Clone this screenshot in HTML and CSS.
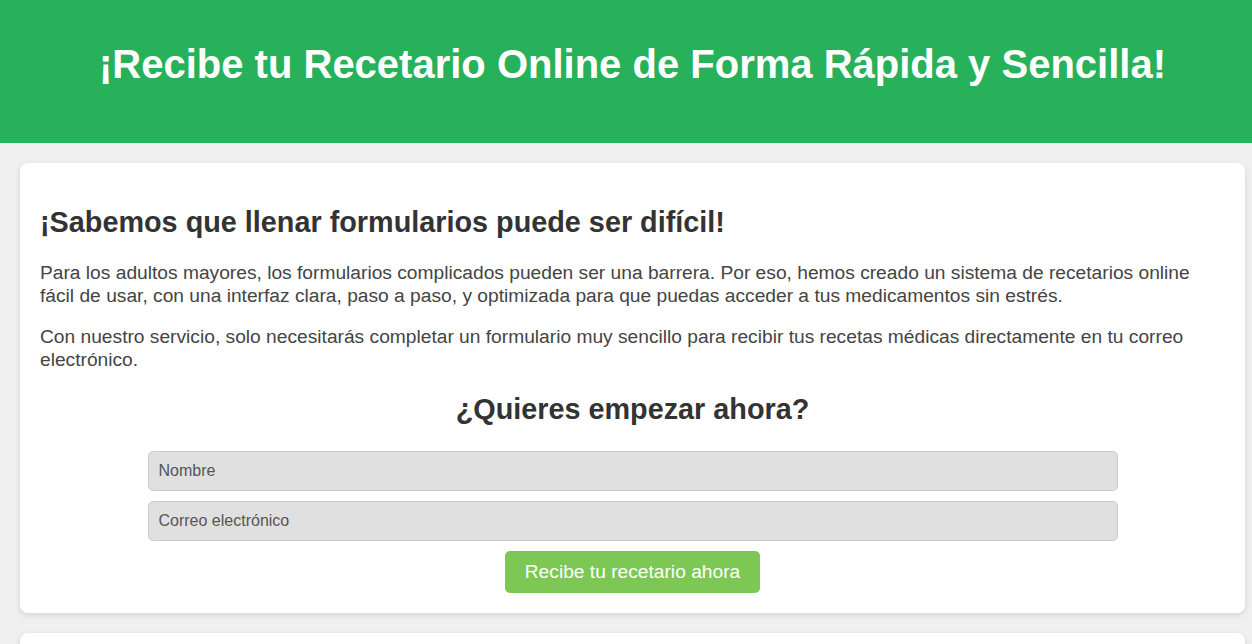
FILE: index.html
```html
<!DOCTYPE html>
<html lang="es">
<head>
<meta charset="utf-8">
<title>Recetario Online</title>
<link rel="stylesheet" href="styles.css">
</head>
<body>
<div class="page">
  <header class="hero">
    <h1>¡Recibe tu Recetario Online de Forma Rápida y Sencilla!</h1>
  </header>
  <main class="main">
    <section class="card">
      <h2>¡Sabemos que llenar formularios puede ser difícil!</h2>
      <p>Para los adultos mayores, los formularios complicados pueden ser una barrera. Por eso, hemos creado un sistema de recetarios online fácil de usar, con una interfaz clara, paso a paso, y optimizada para que puedas acceder a tus medicamentos sin estrés.</p>
      <p>Con nuestro servicio, solo necesitarás completar un formulario muy sencillo para recibir tus recetas médicas directamente en tu correo electrónico.</p>
      <h3>¿Quieres empezar ahora?</h3>
      <form class="form">
        <input class="field" type="text" placeholder="Nombre">
        <input class="field" type="email" placeholder="Correo electrónico">
        <button class="btn" type="button">Recibe tu recetario ahora</button>
      </form>
    </section>
    <section class="card card-next"></section>
  </main>
</div>
</body>
</html>
```
FILE: styles.css
```css
html { overflow-x: hidden; }
body {
  margin: 0;
  background: #f0f0f0;
  font-family: "Liberation Sans", Arial, sans-serif;
  color: #333;
}
.page { width: 1265px; }
.hero {
  box-sizing: border-box;
  background: #27b15a;
  height: 143px;
  padding-top: 41px;
  display: flex;
  justify-content: center;
  align-items: flex-start;
}
.hero h1 {
  margin: 0;
  color: #fff;
  font-size: 40px;
  line-height: 46px;
  font-weight: bold;
}
.main {
  padding: 20px;
  display: flex;
  flex-direction: column;
  gap: 20px;
}
.card {
  background: #fff;
  border-radius: 8px;
  box-shadow: 0 2px 6px rgba(0,0,0,0.12);
  padding: 20px;
}
.card h2 {
  font-size: 28.8px;
  line-height: 33px;
  margin: 23px 0 22px;
  color: #333;
}
.card p {
  font-size: 19.2px;
  line-height: 23px;
  color: #444;
  margin: 18px 0;
}
.card h3 {
  text-align: center;
  font-size: 28.8px;
  line-height: 33px;
  margin: 22px 0 25px;
  color: #333;
}
.form {
  display: flex;
  flex-direction: column;
  align-items: center;
  gap: 10px;
}
.field {
  box-sizing: border-box;
  width: 970px;
  height: 40px;
  padding: 0 10px;
  background: #e0e0e0;
  border: 1px solid #ccc;
  border-radius: 5px;
  font-family: inherit;
  font-size: 16px;
  color: #333;
}
.field::placeholder { color: #555; }
.btn {
  background: #7dc855;
  color: #fff;
  border: none;
  border-radius: 5px;
  font-family: inherit;
  font-size: 19.2px;
  height: 42px;
  padding: 0 20px;
}
.card-next { height: 100px; }
```
